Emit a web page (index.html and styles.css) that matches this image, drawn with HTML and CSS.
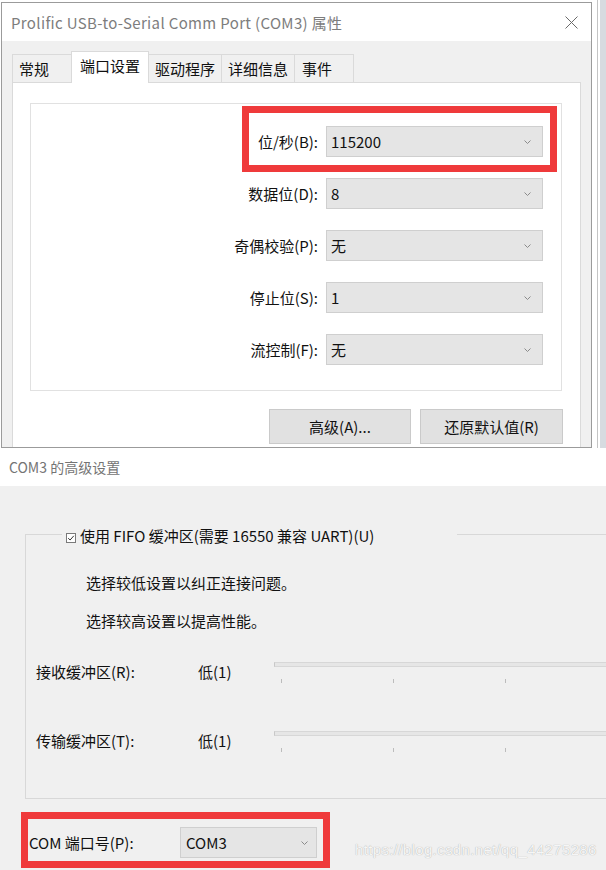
FILE: index.html
```html
<!DOCTYPE html>
<html lang="zh-CN">
<head>
<meta charset="utf-8">
<title>COM3 属性</title>
<link rel="stylesheet" href="styles.css">
</head>
<body>
<div class="shot1">
  <div class="window">
    <div class="titlebar">
      <span class="title">Prolific USB-to-Serial Comm Port (COM3) 属性</span>
      <svg class="close" width="13" height="13" viewBox="0 0 13 13"><path d="M0.5 0.5L12.5 12.5M12.5 0.5L0.5 12.5" stroke="#6a6a6a" stroke-width="1" fill="none"/></svg>
    </div>
    <div class="body">
      <div class="tabs">
        <div class="tab">常规</div>
        <div class="tab active">端口设置</div>
        <div class="tab">驱动程序</div>
        <div class="tab">详细信息</div>
        <div class="tab last">事件</div>
      </div>
      <div class="page">
        <div class="frame">
          <div class="row"><span class="lbl">位/秒(B):</span><div class="combo"><span>115200</span><svg class="chev" width="7" height="4" viewBox="0 0 7 4"><path d="M0.5 0.5L3.5 3.5L6.5 0.5" stroke="#8a8a8a" fill="none"/></svg></div></div>
          <div class="row"><span class="lbl">数据位(D):</span><div class="combo"><span>8</span><svg class="chev" width="7" height="4" viewBox="0 0 7 4"><path d="M0.5 0.5L3.5 3.5L6.5 0.5" stroke="#8a8a8a" fill="none"/></svg></div></div>
          <div class="row"><span class="lbl">奇偶校验(P):</span><div class="combo"><span>无</span><svg class="chev" width="7" height="4" viewBox="0 0 7 4"><path d="M0.5 0.5L3.5 3.5L6.5 0.5" stroke="#8a8a8a" fill="none"/></svg></div></div>
          <div class="row"><span class="lbl">停止位(S):</span><div class="combo"><span>1</span><svg class="chev" width="7" height="4" viewBox="0 0 7 4"><path d="M0.5 0.5L3.5 3.5L6.5 0.5" stroke="#8a8a8a" fill="none"/></svg></div></div>
          <div class="row"><span class="lbl">流控制(F):</span><div class="combo"><span>无</span><svg class="chev" width="7" height="4" viewBox="0 0 7 4"><path d="M0.5 0.5L3.5 3.5L6.5 0.5" stroke="#8a8a8a" fill="none"/></svg></div></div>
          <div class="mark mark1"></div>
        </div>
        <div class="buttons">
          <div class="btn btn-adv">高级(A)...</div>
          <div class="btn btn-reset">还原默认值(R)</div>
        </div>
      </div>
    </div>
  </div>
  <div class="side"><div class="side-line"></div><div class="side-strip"></div></div>
</div>

<div class="shot2">
  <div class="title2">COM3 的高级设置</div>
  <div class="adv">
    <fieldset class="group">
      <legend class="legend"><svg class="check" width="10" height="10" viewBox="0 0 10 10"><rect x="0.5" y="0.5" width="9" height="9" fill="#fff" stroke="#7a7a7a"/><path d="M2.2 5.2L4.1 7L7.8 2.8" stroke="#333" stroke-width="1" fill="none"/></svg><span>使用 FIFO 缓冲区(需要 16550 兼容 UART)(U)</span></legend>
      <p class="hint hint1">选择较低设置以纠正连接问题。</p>
      <p class="hint hint2">选择较高设置以提高性能。</p>
      <div class="srow srow1">
        <span class="slbl">接收缓冲区(R):</span>
        <span class="sval">低(1)</span>
        <div class="slider"><div class="track"></div><div class="ticks"><i></i><i></i><i></i></div></div>
      </div>
      <div class="srow srow2">
        <span class="slbl">传输缓冲区(T):</span>
        <span class="sval">低(1)</span>
        <div class="slider"><div class="track"></div><div class="ticks"><i></i><i></i><i></i></div></div>
      </div>
    </fieldset>
    <div class="portrow">
      <span class="plbl">COM 端口号(P):</span>
      <div class="combo combo-port"><span>COM3</span><svg class="chev" width="7" height="4" viewBox="0 0 7 4"><path d="M0.5 0.5L3.5 3.5L6.5 0.5" stroke="#8a8a8a" fill="none"/></svg></div>
    </div>
    <div class="mark mark2"></div>
    <div class="watermark">https://blog.csdn.net/qq_44275286</div>
  </div>
</div>
</body>
</html>
```
FILE: styles.css
```css
html, body {
  margin: 0;
  padding: 0;
}
body {
  width: 606px;
  height: 870px;
  overflow: hidden;
  background: #fff;
  font-family: "Noto Sans CJK SC", "Noto Sans", sans-serif;
  font-size: 15px;
  color: #111;
}

/* ---------- first screenshot ---------- */
.shot1 {
  display: flex;
  height: 448px;
  background: #fff;
}
.window {
  box-sizing: border-box;
  width: 591px;
  height: 446px;
  margin: 2px 0 0 1px;
  border: 1px solid #9b9b9b;
  display: flex;
  flex-direction: column;
  background: #f0f0f0;
}
.titlebar {
  height: 38px;
  flex: none;
  background: #fff;
  display: flex;
  align-items: center;
  justify-content: space-between;
  padding: 0 13px 0 9px;
}
.title {
  color: #7d7d7d;
  font-size: 15px;
  letter-spacing: 0.35px;
}
.close {
  display: block;
}
.body {
  flex: 1;
  display: flex;
  flex-direction: column;
  padding: 0 10px;
  min-height: 0;
}
.tabs {
  height: 41px;
  flex: none;
  display: flex;
  align-items: flex-end;
}
.tab {
  box-sizing: border-box;
  height: 28px;
  min-width: 59px;
  padding: 0 6px;
  border: 1px solid #dadada;
  border-right: none;
  border-bottom: none;
  background: #f0f0f0;
  line-height: 27px;
  font-size: 15px;
}
.tab.last {
  border-right: 1px solid #dadada;
  min-width: 60px;
  padding-left: 7px;
}
.tab.active {
  position: relative;
  height: 32px;
  margin-bottom: -1px;
  padding: 0 8px;
  background: #fff;
  border-right: 1px solid #dadada;
  line-height: 28px;
}
.tab.active + .tab {
  border-left: none;
}
.page {
  flex: 1;
  background: #fff;
  border: 1px solid #dadada;
  border-bottom: none;
  padding: 20px 18px 0 17px;
}
.frame {
  position: relative;
  box-sizing: border-box;
  height: 288px;
  border: 1px solid #e1e1e1;
  padding: 22px 18px 0 0;
  display: flex;
  flex-direction: column;
  align-items: flex-end;
  gap: 21px;
}
.row {
  display: flex;
  align-items: center;
  gap: 8px;
}
.lbl {
  font-size: 15px;
}
.combo {
  box-sizing: border-box;
  width: 217px;
  height: 31px;
  background: #e5e5e5;
  border: 1px solid #cfcfcf;
  display: flex;
  align-items: center;
  justify-content: space-between;
  padding: 0 11px 0 4px;
  font-size: 15px;
}
.chev {
  display: block;
}
.mark {
  position: absolute;
  box-sizing: border-box;
  border: 7px solid #ef3a3b;
}
.mark1 {
  left: 211px;
  top: 2px;
  width: 315px;
  height: 66px;
}
.buttons {
  display: flex;
  justify-content: flex-end;
  gap: 9px;
  margin: 18px -1px 0 0;
}
.btn {
  box-sizing: border-box;
  height: 35px;
  background: #e1e1e1;
  border: 1px solid #cacaca;
  display: flex;
  align-items: center;
  justify-content: center;
  font-size: 15px;
}
.btn-adv { width: 142px; }
.btn-reset { width: 143px; }

.side {
  flex: 1;
  display: flex;
  padding-left: 5px;
}
.side-line {
  width: 1px;
  background: #c4c4c4;
}
.side-strip {
  flex: 1;
  margin-left: 2px;
  background: #d7dbe0;
}

/* ---------- second screenshot ---------- */
.shot2 {
  position: relative;
  height: 422px;
}
.title2 {
  height: 38px;
  padding-left: 9px;
  line-height: 38px;
  font-size: 14px;
  color: #747474;
  background: #fff;
}
.adv {
  position: relative;
  height: 384px;
  background: #f0f0f0;
  overflow: hidden;
}
.group {
  margin: 36px -40px 0 25px;
  padding: 0 0 46px 0;
  border: 1px solid #d8d8d8;
  min-width: 0;
}
.legend {
  margin-left: 36px;
  padding: 4px 0 0 4px;
  width: 395px;
  box-sizing: border-box;
  line-height: 20px;
  font-size: 15px;
  white-space: nowrap;
}
.check {
  display: inline-block;
  vertical-align: -1px;
  margin-right: 4px;
}
.hint {
  margin: 0 0 0 60px;
  line-height: 20px;
  font-size: 15px;
}
.hint1 { margin-top: 27px; }
.hint2 { margin-top: 18px; }
.srow {
  display: flex;
  align-items: flex-start;
  padding-left: 10px;
  line-height: 20px;
}
.srow1 { margin-top: 31px; }
.srow2 { margin-top: 48px; }
.slbl {
  width: 162px;
  flex: none;
  font-size: 15px;
}
.sval {
  width: 76px;
  flex: none;
  font-size: 15px;
}
.slider {
  flex: 1;
}
.track {
  box-sizing: border-box;
  height: 5px;
  background: #e6e6e6;
  border: 1px solid #d7d7d7;
  border-left-color: #c8c8c8;
}
.ticks {
  display: flex;
  gap: 111px;
  padding-left: 7px;
  margin-top: 12px;
}
.ticks i {
  display: block;
  width: 1px;
  height: 4px;
  background: #bcbcbc;
}
.portrow {
  display: flex;
  align-items: center;
  margin-top: 28px;
  padding-left: 29px;
}
.plbl {
  width: 151px;
  flex: none;
  font-size: 15px;
}
.combo-port {
  width: 137px;
  padding: 0 8px 0 5px;
}
.mark2 {
  left: 21px;
  top: 326px;
  width: 309px;
  height: 56px;
}
.watermark {
  position: absolute;
  left: 355px;
  top: 355px;
  font-family: "Liberation Sans", sans-serif;
  font-size: 15px;
  color: #f6f6f6;
  text-shadow: 0 0 1px rgba(0, 0, 0, 0.35);
  letter-spacing: 0.35px;
}
```
